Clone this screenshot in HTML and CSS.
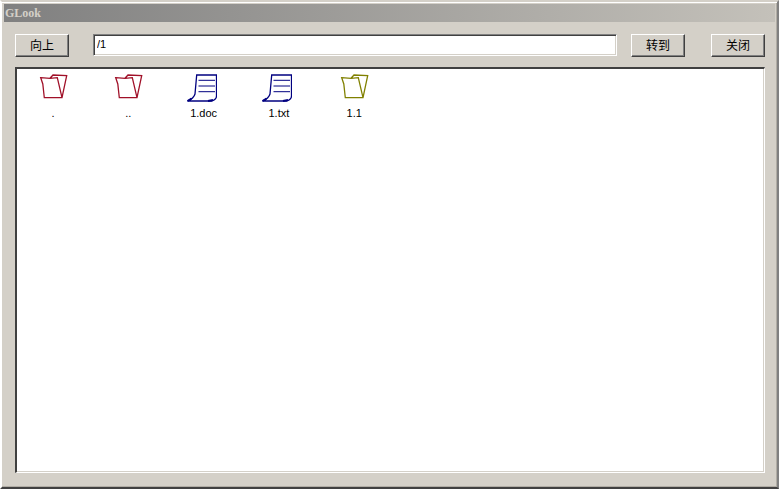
FILE: index.html
```html
<!DOCTYPE html>
<html lang="zh-CN">
<head>
    <meta charset="UTF-8">
    <title>GLook</title>
    <link rel="stylesheet" href="styles.css">
</head>
<body>
    <svg class="defs" width="0" height="0">
        <symbol id="folder" viewBox="0 0 30 30">
            <path d="M2.700 4.700L12 5.300L15 2L28.700 2.700L24 24.700H6.300L4.800 11L2.700 4.700Z M12 5.300L19.300 4.700L24 24.700" fill="none" stroke="currentColor" stroke-width="1.300"/>
        </symbol>
        <symbol id="doc" viewBox="0 0 30 30">
            <path d="M9.700 2H29.500V23C29.500 25 28 27 25 28H0.500C4 26.500 7 24.500 8 21L9.700 2Z" fill="none" stroke="currentColor" stroke-width="1.300"/>
            <path d="M11.500 7.300H28M11.500 13H28M11.500 18.700H28" fill="none" stroke="currentColor" stroke-width="1"/>
            <path d="M0.500 28L4.500 25.500M21 28L26 27" fill="none" stroke="currentColor" stroke-width="2"/>
        </symbol>
    </svg>

    <div class="window">
        <div class="title-bar">GLook</div>

        <div class="toolbar">
            <button class="btn">向上</button>
            <input class="path-input" type="text" value="/1">
            <button class="btn">转到</button>
            <button class="btn btn-close">关闭</button>
        </div>

        <div class="file-list">
            <div class="file">
                <svg class="file-icon dir"><use href="#folder"/></svg>
                <span>.</span>
            </div>
            <div class="file">
                <svg class="file-icon dir"><use href="#folder"/></svg>
                <span>..</span>
            </div>
            <div class="file">
                <svg class="file-icon doc"><use href="#doc"/></svg>
                <span>1.doc</span>
            </div>
            <div class="file">
                <svg class="file-icon doc"><use href="#doc"/></svg>
                <span>1.txt</span>
            </div>
            <div class="file">
                <svg class="file-icon other"><use href="#folder"/></svg>
                <span>1.1</span>
            </div>
        </div>
    </div>
</body>
</html>
```

FILE: styles.css
```css
html, body {
    margin: 0;
    padding: 0;
    height: 100%;
    overflow: hidden;
    background-color: #d4d0c8;
}

.defs {
    position: absolute;
}

.window {
    box-sizing: border-box;
    width: 779px;
    height: 489px;
    padding: 2px 2px 1px 2px;
    background-color: #d4d0c8;
    border: 2px solid;
    border-color: #d4d0c8 #808080 #404040 #ffffff;
    box-shadow: inset 0 1px 0 #ffffff, inset -1px -1px 0 #b0aca4;
    display: flex;
    flex-direction: column;
    font-family: "Liberation Sans", "Noto Sans CJK SC", sans-serif;
}

/* Title */
.title-bar {
    height: 18px;
    flex-shrink: 0;
    line-height: 18px;
    padding-left: 1px;
    background: linear-gradient(to right, #808080, #c4c1ba);
    color: #d4d0c8;
    font-family: "Liberation Serif", serif;
    font-size: 12px;
    font-weight: bold;
}

/* Toolbar */
.toolbar {
    display: flex;
    align-items: flex-start;
    padding: 12px 10px 0 11px;
    height: 33px;
    flex-shrink: 0;
}

.btn {
    box-sizing: border-box;
    width: 54px;
    height: 23px;
    padding: 0 0 2px 0;
    background-color: #d4d0c8;
    border: 1px solid;
    border-color: #ffffff #404040 #404040 #ffffff;
    box-shadow: inset -1px -1px 0 #808080;
    color: #000;
    font-family: "Noto Sans CJK SC", sans-serif;
    font-size: 12px;
}

.btn-close {
    margin-left: 26px;
}

.path-input {
    box-sizing: border-box;
    width: 524px;
    height: 22px;
    margin: 0 14px 0 24px;
    padding: 0 3px 2px 3px;
    background-color: #fff;
    border: 1px solid;
    border-color: #808080 #ffffff #ffffff #808080;
    box-shadow: inset 1px 1px 0 #404040, inset -1px -1px 0 #d4d0c8;
    color: #000;
    font-family: "Liberation Sans", sans-serif;
    font-size: 11px;
    outline: none;
}

/* File list */
.file-list {
    box-sizing: border-box;
    width: 750px;
    height: 406px;
    margin-left: 11px;
    padding-top: 4px;
    background-color: #fff;
    border-style: solid;
    border-width: 2px 1px 1px 2px;
    border-color: #404040 #ffffff #ffffff #404040;
    box-shadow: inset -1px -1px 0 #d4d0c8;
    display: flex;
    align-items: flex-start;
    gap: 3.3px;
}

.file {
    width: 72px;
    display: flex;
    flex-direction: column;
    align-items: center;
    font-size: 11px;
    line-height: 14px;
    color: #000;
}

.file-icon {
    width: 30px;
    height: 30px;
    margin-bottom: 3px;
}

.dir {
    color: #a01028;
}

.doc {
    color: #000080;
    margin-left: -3px;
}

.other {
    color: #808000;
}
```
